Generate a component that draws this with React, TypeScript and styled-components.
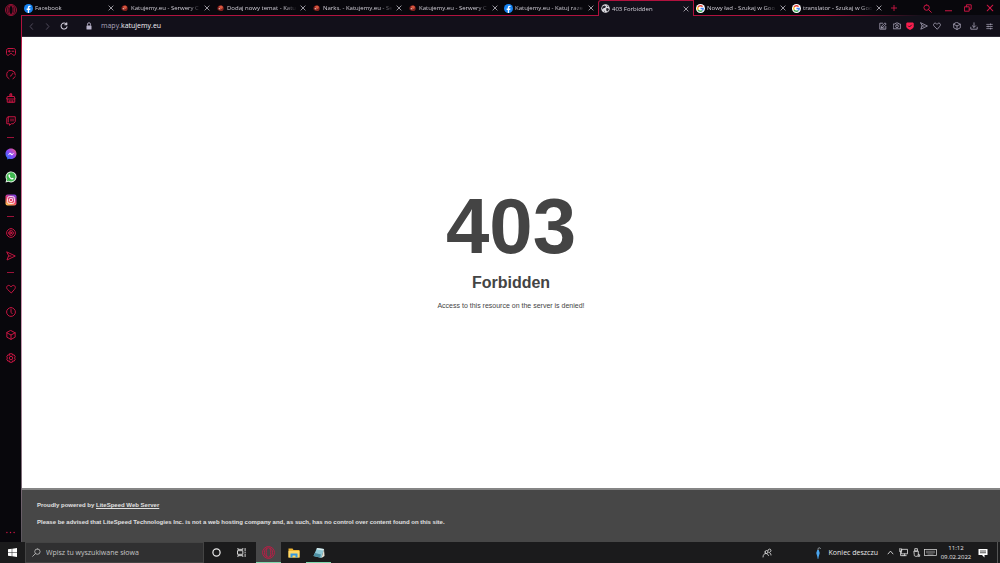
import React from 'react';
import styled, { createGlobalStyle, css } from 'styled-components';

const UI_FONT = '"Open Sans", "Noto Sans", sans-serif';
const PAGE_FONT = '"Liberation Sans", Arial, sans-serif';
const ACCENT = '#cf1645';

const GlobalStyle = createGlobalStyle`
  *, *::before, *::after { box-sizing: border-box; }
  body { margin: 0; background: #08070c; font-family: ${UI_FONT}; }
  button, input { font: inherit; color: inherit; background: none; border: 0; padding: 0; margin: 0; outline: 0; }
  p, h1, h2 { margin: 0; }
  svg { display: block; flex: none; }
`;

const Desktop = styled.div`
  display: flex;
  flex-direction: column;
  min-height: 100vh;
`;

const Browser = styled.div`
  display: flex;
  flex: 1;
`;

const Sidebar = styled.nav`
  display: flex;
  flex-direction: column;
  align-items: center;
  width: 21px;
  padding: 2px 0 2px;
  background: #08070c;
  color: ${ACCENT};
`;

const SideButton = styled.button`
  display: flex;
  align-items: center;
  justify-content: center;
  width: 16px;
  height: 16px;
`;

const SideGroup = styled.div<{ $first?: boolean }>`
  display: flex;
  flex-direction: column;
  gap: 7px;
  ${p => p.$first && css`margin-top: 26px;`}
`;

const SideRule = styled.hr`
  width: 7px;
  height: 1px;
  margin: 8px 0;
  border: 0;
  background: #9c1239;
`;

const MoreButton = styled(SideButton)`
  margin-top: auto;
`;

const BrowserWindow = styled.div`
  display: flex;
  flex: 1;
  min-width: 0;
`;

const WindowEdge = styled.div`
  flex: none;
  width: 1px;
  margin-top: 15px;
  background: linear-gradient(#b0123e 4%, #cf4a7a 10%, #c99ab2 60%, #5a555c);
`;

const WindowBody = styled.div`
  display: flex;
  flex: 1;
  flex-direction: column;
  min-width: 0;
`;

const TabBar = styled.header`
  display: flex;
  height: 16px;
  background-color: #08070c;
  background-image: linear-gradient(90deg, #b0123e 82%, #12101a 92%);
  background-position: 0 15px;
  background-size: 100% 1px;
  background-repeat: no-repeat;
  color: #d2cfd8;
`;

const Tab = styled.div<{ $active?: boolean }>`
  display: flex;
  flex: 0 1 96px;
  align-items: center;
  gap: 2px;
  min-width: 0;
  padding: 0 3px 0 2px;
  ${p => p.$active && css`
    background: #12101a;
    border: 1px solid #b0123e;
    border-bottom: 0;
    border-radius: 3px 0 0 0;
  `}
`;

const TabTitle = styled.button`
  flex: 1;
  min-width: 0;
  overflow: hidden;
  font-size: 6px;
  line-height: 12px;
  text-align: left;
  white-space: nowrap;
  mask-image: linear-gradient(90deg, #000 82%, transparent);
`;

const IconButton = styled.button<{ $w: number; $dim?: boolean }>`
  display: flex;
  flex: none;
  align-items: center;
  justify-content: center;
  width: ${p => p.$w}px;
  height: 100%;
  ${p => p.$dim && css`color: #5a5567;`}
`;

const NewTab = styled(IconButton)`
  color: ${ACCENT};
`;

const WindowControls = styled.div`
  display: flex;
  margin-left: auto;
  color: ${ACCENT};
`;

const AddressBar = styled.div`
  display: flex;
  align-items: center;
  height: 21px;
  padding-left: 1px;
  background: #12101a;
  border-bottom: 1px solid #2d2b35;
  color: #aba6ba;
`;

const UrlField = styled.label`
  display: flex;
  flex: 1;
  align-items: center;
  min-width: 0;
  height: 100%;
  padding-left: 12px;
  font-size: 7px;
  line-height: 12px;
`;

const UrlHost = styled.input`
  flex: 1;
  min-width: 0;
  height: 12px;
  color: #f4f2f8;
`;

const UrlPrefix = styled.span`
  padding-left: 8px;
`;

const Tools = styled.div`
  display: flex;
  height: 100%;
`;

const Page = styled.div`
  display: flex;
  flex: 1;
  flex-direction: column;
  background: #fff;
  color: #444;
  font-family: ${PAGE_FONT};
`;

const Message = styled.main`
  display: flex;
  flex: 1;
  flex-direction: column;
  align-items: center;
  justify-content: center;
  padding-bottom: 28px;
`;

const Code = styled.h1`
  font-size: 78px;
  line-height: 78px;
`;

const Status = styled.h2`
  margin-top: 8px;
  font-size: 16px;
  line-height: 20px;
`;

const Detail = styled.p`
  margin-top: 9px;
  font-size: 7px;
  line-height: 8px;
`;

const Footer = styled.footer`
  display: flex;
  flex-direction: column;
  gap: 9px;
  padding: 11px 15px 16px;
  background: #474747;
  border-top: 2px solid #858585;
  color: #e0e0e0;
  font-size: 6px;
  font-weight: 700;
  line-height: 8px;
`;

const FooterLink = styled.a`
  color: inherit;
`;

const Taskbar = styled.footer`
  display: flex;
  height: 21px;
  background: #1b1b1c;
  color: #e8e8e8;
`;

const SearchBox = styled.label`
  display: flex;
  align-items: center;
  flex: 0 1 179px;
  gap: 5px;
  padding: 0 6px;
  background: #303031;
  border: 1px solid #444;
  color: #c4c4c4;
`;

const SearchInput = styled.input`
  flex: 1;
  min-width: 0;
  height: 14px;
  font-size: 7px;
  &::placeholder { color: #c4c4c4; opacity: 1; }
`;

const TaskButton = styled.button<{ $open?: boolean; $active?: boolean }>`
  display: flex;
  align-items: center;
  justify-content: center;
  width: 25px;
  ${p => p.$active && css`background: #474748;`}
  ${p => p.$open && css`box-shadow: inset 0 -1px #7fd8ae;`}
`;

const PinnedApps = styled.div`
  display: flex;
  margin-left: 2px;
`;

const Tray = styled.div`
  display: flex;
  align-items: center;
  margin-left: auto;
`;

const Weather = styled.button`
  display: flex;
  align-items: center;
  gap: 6px;
  height: 100%;
  margin: 0 6px 0 40px;
  font-size: 7px;
`;

const Clock = styled.button`
  width: 36px;
  font-size: 6px;
  line-height: 9px;
  text-align: center;
`;

const ShowDesktop = styled.button`
  width: 3px;
  height: 100%;
  margin-left: 5px;
  border-left: 1px solid #555;
`;

type IconProps = { d: string; size?: number; w?: number; fill?: string; color?: string };
const Icon = ({ d, size = 10, w = 1.9, fill = 'none', color = 'currentColor' }: IconProps) => (
  <svg width={size} height={size} viewBox="0 0 20 20" fill={fill} stroke={color} strokeWidth={w} strokeLinecap="round" strokeLinejoin="round" aria-hidden="true">
    <path d={d} />
  </svg>
);

const paths = {
  pad: 'M5 3h10c2.500 0 4 1.500 4 4v6c0 2-1 3.500-3.500 3.500C13 16.500 13 13 10 13s-3 3.500-5.500 3.500C2 16.500 1 15 1 13V7c0-2.500 1.500-4 4-4zM4.500 8.500h4M12 8.500h3.500M6.500 6.800v3.400',
  gauge: 'M6 17.500A8.800 8.800 0 1 1 18.800 10M18 13.500a8 8 0 0 1-4 4M9.500 12L14 6.500M9.500 12h.1',
  broom: 'M10 1v5M8.500 2h3v4.500h-3zM3.500 7h13L18 12H2zM2.500 12v6.500h15V12M6.500 18.500V15M10 18.500V15M13.500 18.500V15',
  twitch: 'M4.500 1.500h14V11l-4 4.500h-4L7 18.800v-3.300H1.500V5zM4.500 2v10M10 6v4M14 6v4',
  play: 'M10 1.200a8.800 8.800 0 1 0 0 17.600 8.800 8.800 0 0 0 0-17.600M8 14.500A5 5 0 0 1 8 5.500h4a5 5 0 0 1 0 9zM8.500 7.800l4 2.200-4 2.200z',
  plane: 'M2 2l16.500 8L2 18l3-8zM5 10h5',
  heart: 'M10 17.500L2.800 10.500C.8 8.300.8 5.500 2.800 3.700c2.400-1.900 5.300-.7 7.200 2.100 1.900-2.800 4.800-4 7.200-2.100 2 1.800 2 4.600 0 6.800z',
  clock: 'M10 1.200a8.800 8.800 0 1 0 0 17.600 8.800 8.800 0 0 0 0-17.600M10 5v5.500l2.500 3',
  cube: 'M10 1.200l8.300 4.400v8.800L10 18.800l-8.300-4.400V5.600zM1.700 5.600L10 10l8.300-4.400M10 10v8.500',
  gear: 'M7.500 1.500h5l.8 2.800 2.900-.7 2.500 4.200-2 2.200 2 2.200-2.500 4.200-2.900-.7-.8 2.800h-5l-.8-2.800-2.900.7-2.500-4.200 2-2.200-2-2.200 2.500-4.200 2.900.7zM10 6.500a3.500 3.500 0 1 0 0 7 3.500 3.500 0 0 0 0-7',
  close: 'M3 3l14 14M17 3L3 17',
  plus: 'M10 1v18M1 10h18',
  search: 'M8 2a6 6 0 1 0 0 12A6 6 0 0 0 8 2M12.500 12.500L18.500 18.500',
  searchLeft: 'M12 2a6 6 0 1 0 0 12 6 6 0 0 0 0-12M7.500 12.500L1.500 18.500',
  min: 'M1 16.500h18',
  restore: 'M2 7h11v11H2zM6 7V2h12v11h-5',
  back: 'M13 2L6 10l7 8',
  fwd: 'M7 2l7 8-7 8',
  reload: 'M16.500 6A7.500 7.500 0 1 0 17.500 12M17 2v5h-5',
  edit: 'M9 3H2v15h15v-7M6 14l1-4L15 2l3 3-8 8zM5 15h8',
  camera: 'M1.500 5h4L7 2.500h6L14.500 5h4v12h-17zM10 7a3.500 3.500 0 1 0 0 7 3.500 3.500 0 0 0 0-7',
  download: 'M10 2v11M6 9.500l4 4 4-4M2 13v5h16v-5',
  sliders: 'M2 4h16M2 10h16M2 16h16M13 2.500v3M6 8.500v3M13 14.500v3',
  up: 'M3 14l7-8 7 8',
  network: 'M6 3h13v10H6zM9 17h7M12.500 13v4M1 2h5v5H1zM3.500 7v10H9',
  usb: 'M7 1.500h5V7H7zM5 7h9v8.500c0 2-1 3-3 3H8c-2 0-3-1-3-3zM14 15h3v3.500h-3',
  people: 'M6 8a3 3 0 1 0 6 0 3 3 0 0 0-6 0M2 18c0-5 3-7 6-7 2 0 4 2 5 4M12 5a3 3 0 1 1 4 3M14 9c2 0 4 2 4 5',
};

const Opera = ({ size }: { size: number }) => (
  <svg width={size} height={size} viewBox="0 0 24 24" fill="none" stroke={ACCENT} strokeWidth="1.500" aria-hidden="true">
    <circle cx="12" cy="12" r="11" />
    <ellipse cx="12" cy="12" rx="4.200" ry="8.800" />
    <path d="M9.500 3.300C2.800 6 2.800 18 9.500 20.700M14.500 3.300c6.700 2.700 6.700 14.700 0 17.400" />
  </svg>
);

const FacebookIcon = () => (
  <svg width="9" height="9" viewBox="0 0 18 18" aria-hidden="true">
    <circle cx="9" cy="9" r="9" fill="#1683f2" />
    <path d="M7.600 18v-6H5.300V9.200h2.300V7.100c0-2.400 1.400-3.700 3.500-3.700.9 0 1.700.1 1.900.2V6h-1.300c-1.100 0-1.500.7-1.500 1.400v1.800h2.700l-.5 2.800h-2.200v6z" fill="#fff" />
  </svg>
);

const KatujemyIcon = () => (
  <svg width="9" height="9" viewBox="0 0 18 18" aria-hidden="true">
    <path d="M3 7c2-5 9-6 12-1 1 4 0 7-3 8-3 0-7-1-9-3z" fill="#84211e" />
    <path d="M6 5c2-2 6-2 8 1l-2 4-4-1z" fill="#d9583f" />
    <path d="M5 8l3 .5 1 2.500-3-.5z" fill="#e3c4bc" />
  </svg>
);

const GlobeIcon = () => (
  <svg width="9" height="9" viewBox="0 0 18 18" aria-hidden="true">
    <circle cx="9" cy="9" r="8.500" fill="#dedde2" />
    <path d="M3 5l4-2 3 2-2 3H5l-1 3-2-2zM10 9l4-1 2 3-3 4-2-1zM11 2l4 3-2 1zM5 13l3 1v2z" fill="#25232d" />
  </svg>
);

const GoogleIcon = () => (
  <svg width="9" height="9" viewBox="0 0 18 18" fill="none" strokeWidth="2.600" aria-hidden="true">
    <circle cx="9" cy="9" r="9" fill="#fff" />
    <path d="M13.200 5.400A5.500 5.500 0 0 0 4.200 6.300" stroke="#ea4335" />
    <path d="M4.200 6.300a5.500 5.500 0 0 0 0 5.400" stroke="#fbbc05" />
    <path d="M4.200 11.700a5.500 5.500 0 0 0 8.500 1.400" stroke="#34a853" />
    <path d="M12.700 13.100c1.200-1 1.800-2.600 1.700-4.100H9" stroke="#4285f4" />
  </svg>
);

const Messenger = () => (
  <svg width="12" height="12" viewBox="0 0 24 24" aria-hidden="true">
    <defs>
      <linearGradient id="msg" x1="0" y1="1" x2="1" y2="0">
        <stop offset="0" stopColor="#1b7cff" />
        <stop offset=".5" stopColor="#8a45f5" />
        <stop offset="1" stopColor="#ff5c7c" />
      </linearGradient>
    </defs>
    <path d="M12 1C5.500 1 1 5.600 1 11.500c0 3.200 1.300 6 3.500 7.900V23l3.500-1.600c1.300.4 2.600.6 4 .6 6.500 0 11-4.600 11-10.500S18.500 1 12 1z" fill="url(#msg)" />
    <path d="M5 15l5-6 4 3 5-3-5 6-4-3z" fill="#fff" />
  </svg>
);

const WhatsApp = () => (
  <svg width="12" height="12" viewBox="0 0 24 24" aria-hidden="true">
    <path d="M1 23l1.600-5.800A11 11 0 1 1 7 21.500z" fill="#e4f2e6" />
    <path d="M3.500 20.500l1-3.800A9 9 0 1 1 7.500 19.500z" fill="#3fb950" />
    <path d="M8 6.500c-2 1.500-1.500 4.500 1.300 7.500s6 4.200 7.700 2.200c.8-1 .4-1.500-.3-1.900l-1.900-.9-1.300 1.300c-1.800-.7-3-2-3.900-3.500l1-1.300-.9-2.500c-.3-.8-.9-1.200-1.700-.9z" fill="#fff" />
  </svg>
);

const Instagram = () => (
  <svg width="12" height="12" viewBox="0 0 24 24" fill="none" aria-hidden="true">
    <defs>
      <linearGradient id="ig" x1=".2" y1="1" x2=".7" y2="0">
        <stop offset="0" stopColor="#ffc552" />
        <stop offset=".5" stopColor="#ea3c6c" />
        <stop offset="1" stopColor="#7a3fd8" />
      </linearGradient>
    </defs>
    <rect x="1" y="1" width="22" height="22" rx="4" fill="url(#ig)" />
    <rect x="5" y="5" width="14" height="14" rx="4" stroke="#fff" strokeWidth="1.600" />
    <circle cx="12" cy="12" r="3.500" stroke="#fff" strokeWidth="1.600" />
    <circle cx="16" cy="8" r="1" fill="#fff" />
  </svg>
);

const Lock = () => (
  <svg width="8" height="8" viewBox="0 0 16 16" aria-hidden="true">
    <path d="M5 7V4.500a3 3 0 0 1 6 0V7" fill="none" stroke="#b9b3cc" strokeWidth="1.800" />
    <rect x="3" y="7" width="10" height="8" rx="1" fill="#b9b3cc" />
  </svg>
);

const Shield = () => (
  <svg width="8" height="8" viewBox="0 0 16 16" aria-hidden="true">
    <path d="M2 1h12l1.500 2v6c0 3-4 5.500-7.500 7C4.500 14.500.5 12 .5 9V3z" fill="#fa1e4e" />
    <path d="M4.500 7.500L7 10l4.500-4.500" fill="none" stroke="#12101a" strokeWidth="1.800" />
  </svg>
);

type TabInfo = { title: string; icon: React.ReactNode; active?: boolean };
const tabs: TabInfo[] = [
  { title: 'Facebook', icon: <FacebookIcon /> },
  { title: 'Katujemy.eu - Serwery C', icon: <KatujemyIcon /> },
  { title: 'Dodaj nowy temat - Katu', icon: <KatujemyIcon /> },
  { title: 'Narks. - Katujemy.eu - Se', icon: <KatujemyIcon /> },
  { title: 'Katujemy.eu - Serwery C', icon: <KatujemyIcon /> },
  { title: 'Katujemy.eu - Katuj raze', icon: <FacebookIcon /> },
  { title: '403 Forbidden', icon: <GlobeIcon />, active: true },
  { title: 'Nowy ład - Szukaj w Goo', icon: <GoogleIcon /> },
  { title: 'translator - Szukaj w Goo', icon: <GoogleIcon /> },
];

const sideItem = (label: string, d: string) => (
  <SideButton aria-label={label} key={label}><Icon d={d} /></SideButton>
);

export default function App() {
  return (
    <Desktop>
      <GlobalStyle />
      <Browser>
        <Sidebar aria-label="Opera GX">
          <SideButton aria-label="Menu"><Opera size={12} /></SideButton>
          <SideGroup $first>
            {sideItem('GX Corner', paths.pad)}
            {sideItem('GX Control', paths.gauge)}
            {sideItem('GX Cleaner', paths.broom)}
            {sideItem('Twitch', paths.twitch)}
          </SideGroup>
          <SideRule />
          <SideGroup>
            <SideButton aria-label="Messenger"><Messenger /></SideButton>
            <SideButton aria-label="WhatsApp"><WhatsApp /></SideButton>
            <SideButton aria-label="Instagram"><Instagram /></SideButton>
          </SideGroup>
          <SideRule />
          <SideGroup>
            {sideItem('Player', paths.play)}
            {sideItem('My Flow', paths.plane)}
          </SideGroup>
          <SideRule />
          <SideGroup>
            {sideItem('Bookmarks', paths.heart)}
            {sideItem('History', paths.clock)}
            {sideItem('Extensions', paths.cube)}
            {sideItem('Settings', paths.gear)}
          </SideGroup>
          <MoreButton aria-label="More"><Icon d="M2 10h.1M10 10h.1M18 10h.1" size={9} w={3} /></MoreButton>
        </Sidebar>

        <BrowserWindow>
          <WindowEdge />
          <WindowBody>
            <TabBar>
              {tabs.map((tab, i) => (
                <Tab key={i} $active={tab.active}>
                  {tab.icon}
                  <TabTitle>{tab.title}</TabTitle>
                  <IconButton $w={8} aria-label="Close tab"><Icon d={paths.close} size={6} w={2.4} /></IconButton>
                </Tab>
              ))}
              <NewTab $w={16} aria-label="New tab"><Icon d={paths.plus} size={6} w={3} /></NewTab>
              <WindowControls>
                <IconButton $w={24} aria-label="Search tabs"><Icon d={paths.search} size={9} w={2.2} /></IconButton>
                <IconButton $w={18} aria-label="Minimise"><Icon d={paths.min} size={7} w={2.8} /></IconButton>
                <IconButton $w={22} aria-label="Restore"><Icon d={paths.restore} size={8} w={2.4} /></IconButton>
                <IconButton $w={21} aria-label="Close"><Icon d={paths.close} size={8} w={2.6} /></IconButton>
              </WindowControls>
            </TabBar>
            <AddressBar>
              <IconButton $w={16} $dim aria-label="Back"><Icon d={paths.back} size={7} w={2.4} /></IconButton>
              <IconButton $w={16} $dim aria-label="Forward"><Icon d={paths.fwd} size={7} w={2.4} /></IconButton>
              <IconButton $w={18} aria-label="Reload"><Icon d={paths.reload} size={8} w={2.6} color="#d3cfdd" /></IconButton>
              <UrlField>
                <Lock />
                <UrlPrefix>mapy.</UrlPrefix>
                <UrlHost aria-label="Address" defaultValue="katujemy.eu" />
              </UrlField>
              <Tools>
                <IconButton $w={14} aria-label="Edit"><Icon d={paths.edit} size={8} w={2} /></IconButton>
                <IconButton $w={13} aria-label="Snapshot"><Icon d={paths.camera} size={8} w={2} /></IconButton>
                <IconButton $w={14} aria-label="Ad blocker"><Shield /></IconButton>
                <IconButton $w={13} aria-label="Send to My Flow"><Icon d={paths.plane} size={8} w={2} /></IconButton>
                <IconButton $w={14} aria-label="Add bookmark"><Icon d={paths.heart} size={8} w={2} /></IconButton>
                <IconButton $w={25} aria-label="Extensions"><Icon d={paths.cube} size={8} w={2} /></IconButton>
                <IconButton $w={9} aria-label="Downloads"><Icon d={paths.download} size={8} w={2} /></IconButton>
                <IconButton $w={22} aria-label="Easy setup"><Icon d={paths.sliders} size={7} w={2} /></IconButton>
              </Tools>
            </AddressBar>

            <Page>
              <Message>
                <Code>403</Code>
                <Status>Forbidden</Status>
                <Detail>Access to this resource on the server is denied!</Detail>
              </Message>
              <Footer>
                <p>Proudly powered by <FooterLink href="#">LiteSpeed Web Server</FooterLink></p>
                <p>Please be advised that LiteSpeed Technologies Inc. is not a web hosting company and, as such, has no control over content found on this site.</p>
              </Footer>
            </Page>
          </WindowBody>
        </BrowserWindow>
      </Browser>

      <Taskbar>
        <TaskButton aria-label="Start">
          <svg width="9" height="9" viewBox="0 0 18 18" fill="#fff" aria-hidden="true">
            <path d="M0 2.500l7.500-1v7H0zM8.500 1.300L18 0v8.500H8.500zM0 9.500h7.500v7l-7.500-1zM8.500 9.500H18V18l-9.500-1.300z" />
          </svg>
        </TaskButton>
        <SearchBox>
          <Icon d={paths.searchLeft} size={9} w={1.8} />
          <SearchInput aria-label="Wyszukaj" placeholder="Wpisz tu wyszukiwane słowa" />
        </SearchBox>
        <TaskButton aria-label="Cortana"><Icon d="M10 2a8 8 0 1 0 0 16 8 8 0 0 0 0-16" size={9} w={2.8} /></TaskButton>
        <TaskButton aria-label="Task view"><Icon d="M2 6h11v8H2zM2 1v2h11V1M2 19v-2h11v2M18 1v5M18 9v2M18 14v5" size={9} w={2} /></TaskButton>
        <PinnedApps>
          <TaskButton $open $active aria-label="Opera GX"><Opera size={13} /></TaskButton>
          <TaskButton aria-label="Explorer">
            <svg width="12" height="10" viewBox="0 0 24 20" aria-hidden="true">
              <path d="M1 1h8l2 3h12v15H1z" fill="#f2b632" />
              <path d="M1 6h22v13H1z" fill="#ffd968" />
              <path d="M5 19v-8h14v8h-4v-4H9v4z" fill="#3597e0" />
            </svg>
          </TaskButton>
          <TaskButton $open aria-label="Notepad">
            <svg width="12" height="12" viewBox="0 0 24 24" aria-hidden="true">
              <path d="M8 2l14 2-5 18-16-4z" fill="#8fc7d4" />
              <path d="M8 2l14 2-1 3L7 5z" fill="#d9eef0" />
              <path d="M22 4l1 14-6 4z" fill="#e9e4d6" />
              <path d="M4 12l12 3-2 6-13-3z" fill="#4b8ea1" />
            </svg>
          </TaskButton>
        </PinnedApps>
        <Tray>
          <Icon d={paths.people} size={10} w={1.6} />
          <Weather>
            <svg width="11" height="12" viewBox="0 0 22 24" fill="none" aria-hidden="true">
              <path d="M12 7V4c0-3.500 5-3.500 5 0" stroke="#9aa4ac" strokeWidth="1.600" />
              <path d="M10.500 6h3l2 6-2 7-1 5h-1l-1-5-2-7z" fill="#4aa5ee" />
            </svg>
            Koniec deszczu
          </Weather>
          <IconButton $w={13} aria-label="Show hidden icons"><Icon d={paths.up} size={7} w={2.4} /></IconButton>
          <IconButton $w={13} aria-label="Network"><Icon d={paths.network} size={9} w={1.8} /></IconButton>
          <IconButton $w={12} aria-label="USB"><Icon d={paths.usb} size={9} w={1.8} /></IconButton>
          <IconButton $w={16} aria-label="Keyboard">
            <svg width="13" height="7" viewBox="0 0 26 14" fill="none" stroke="currentColor" strokeWidth="1.400" aria-hidden="true">
              <rect x="1" y="1" width="24" height="12" />
              <path d="M4 4.500h18M4 7.500h18M7 10.200h12" strokeOpacity=".6" />
            </svg>
          </IconButton>
          <Clock>11:12<br />09.02.2022</Clock>
          <IconButton $w={18} aria-label="Notifications">
            <svg width="10" height="10" viewBox="0 0 20 20" aria-hidden="true">
              <path d="M1 2h18v12h-6v5l-5-5H1z" fill="#fff" />
              <path d="M4 6h12M4 9.500h12" stroke="#1b1b1c" strokeWidth="1.500" />
            </svg>
          </IconButton>
          <ShowDesktop aria-label="Show desktop" />
        </Tray>
      </Taskbar>
    </Desktop>
  );
}
